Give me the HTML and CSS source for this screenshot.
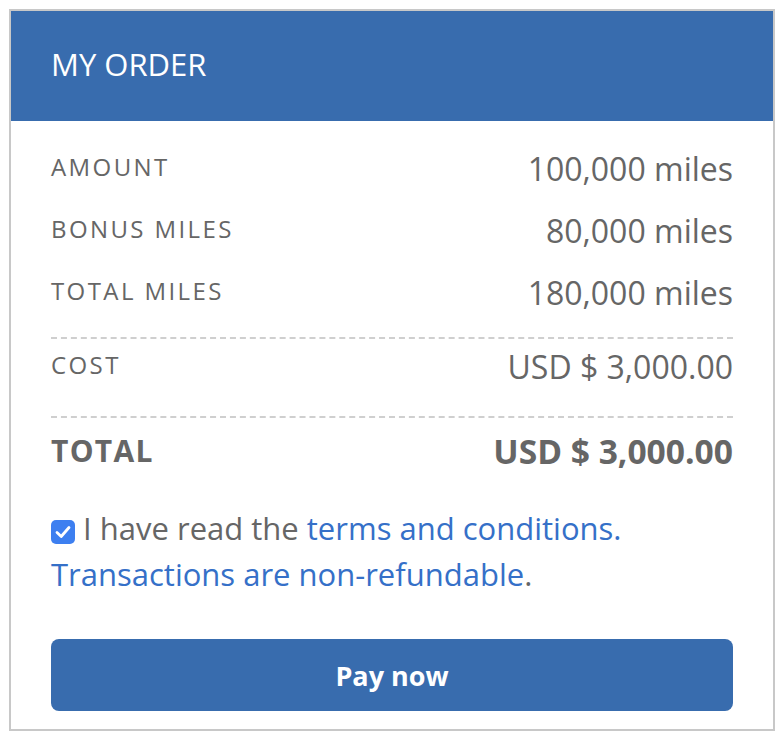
FILE: index.html
```html
<!DOCTYPE html>
<html>

<head>
    <link rel="stylesheet" href="styles.css">
</head>

<body>
    <div class="orderCard">
        <div class="orderHeader">MY ORDER</div>
        <div class="orderBody">
            <div class="orderRow">
                <div class="rowLabel">AMOUNT</div>
                <div class="rowValue">100,000 miles</div>
            </div>
            <div class="orderRow">
                <div class="rowLabel">BONUS MILES</div>
                <div class="rowValue">80,000 miles</div>
            </div>
            <div class="orderRow">
                <div class="rowLabel">TOTAL MILES</div>
                <div class="rowValue">180,000 miles</div>
            </div>
            <div class="orderRow costRow">
                <div class="rowLabel">COST</div>
                <div class="rowValue">USD $ 3,000.00</div>
            </div>
            <div class="orderRow totalRow">
                <div class="rowLabel">TOTAL</div>
                <div class="rowValue">USD $ 3,000.00</div>
            </div>
            <div class="termsText">
                <span class="checkBox">
                    <svg width="24" height="24" viewBox="0 0 24 24">
                        <rect x="0" y="0" width="24" height="24" rx="5" fill="#3d7ff0" />
                        <path d="M6 12.5 L10.2 16.5 L18 7.5" fill="none" stroke="#fff" stroke-width="2.8"
                            stroke-linecap="round" stroke-linejoin="round" />
                    </svg>
                </span>
                I have read the <a href="#" class="termsLink">terms and conditions.</a>
                <a href="#" class="termsLink">Transactions are non-refundable</a>.
            </div>
            <button class="payBtn">Pay now</button>
        </div>
    </div>
</body>

</html>
```

FILE: styles.css
```css
body {
    margin: 9px 7px 9px 9px;
    font-family: "Open Sans", "Noto Sans", sans-serif;
    background: #fff;
}

.orderCard {
    border: 2px solid #c8c8c8;
}

.orderHeader {
    background: #386cae;
    color: #fff;
    height: 110px;
    line-height: 106px;
    padding-left: 40px;
    font-size: 31px;
}

.orderBody {
    padding: 20px 40px 18px 40px;
}

.orderRow {
    display: flex;
    justify-content: space-between;
    align-items: flex-start;
    height: 62px;
    color: #666;
}

.rowLabel {
    font-size: 24px;
    letter-spacing: 2.4px;
    padding-top: 9px;
}

.rowValue {
    font-size: 32px;
    padding-top: 6px;
}

.costRow {
    border-top: 2px dashed #cfcfcf;
    border-bottom: 2px dashed #cfcfcf;
    margin-top: 10px;
    height: 77px;
}

.totalRow {
    height: 87px;
}

.totalRow .rowLabel {
    font-size: 30px;
    font-weight: bold;
    letter-spacing: 1.3px;
    padding-top: 12px;
}

.totalRow .rowValue {
    font-size: 33.6px;
    font-weight: bold;
    padding-top: 10px;
}

.termsText {
    font-size: 31px;
    line-height: 46px;
    color: #666;
}

.checkBox svg {
    vertical-align: -4px;
}

.termsLink {
    color: #3570c8;
    text-decoration: none;
}

.payBtn {
    display: block;
    width: 100%;
    height: 72px;
    margin-top: 42px;
    border: none;
    border-radius: 8px;
    background: #386cae;
    color: #fff;
    font-family: inherit;
    font-size: 27px;
    font-weight: bold;
}
```
